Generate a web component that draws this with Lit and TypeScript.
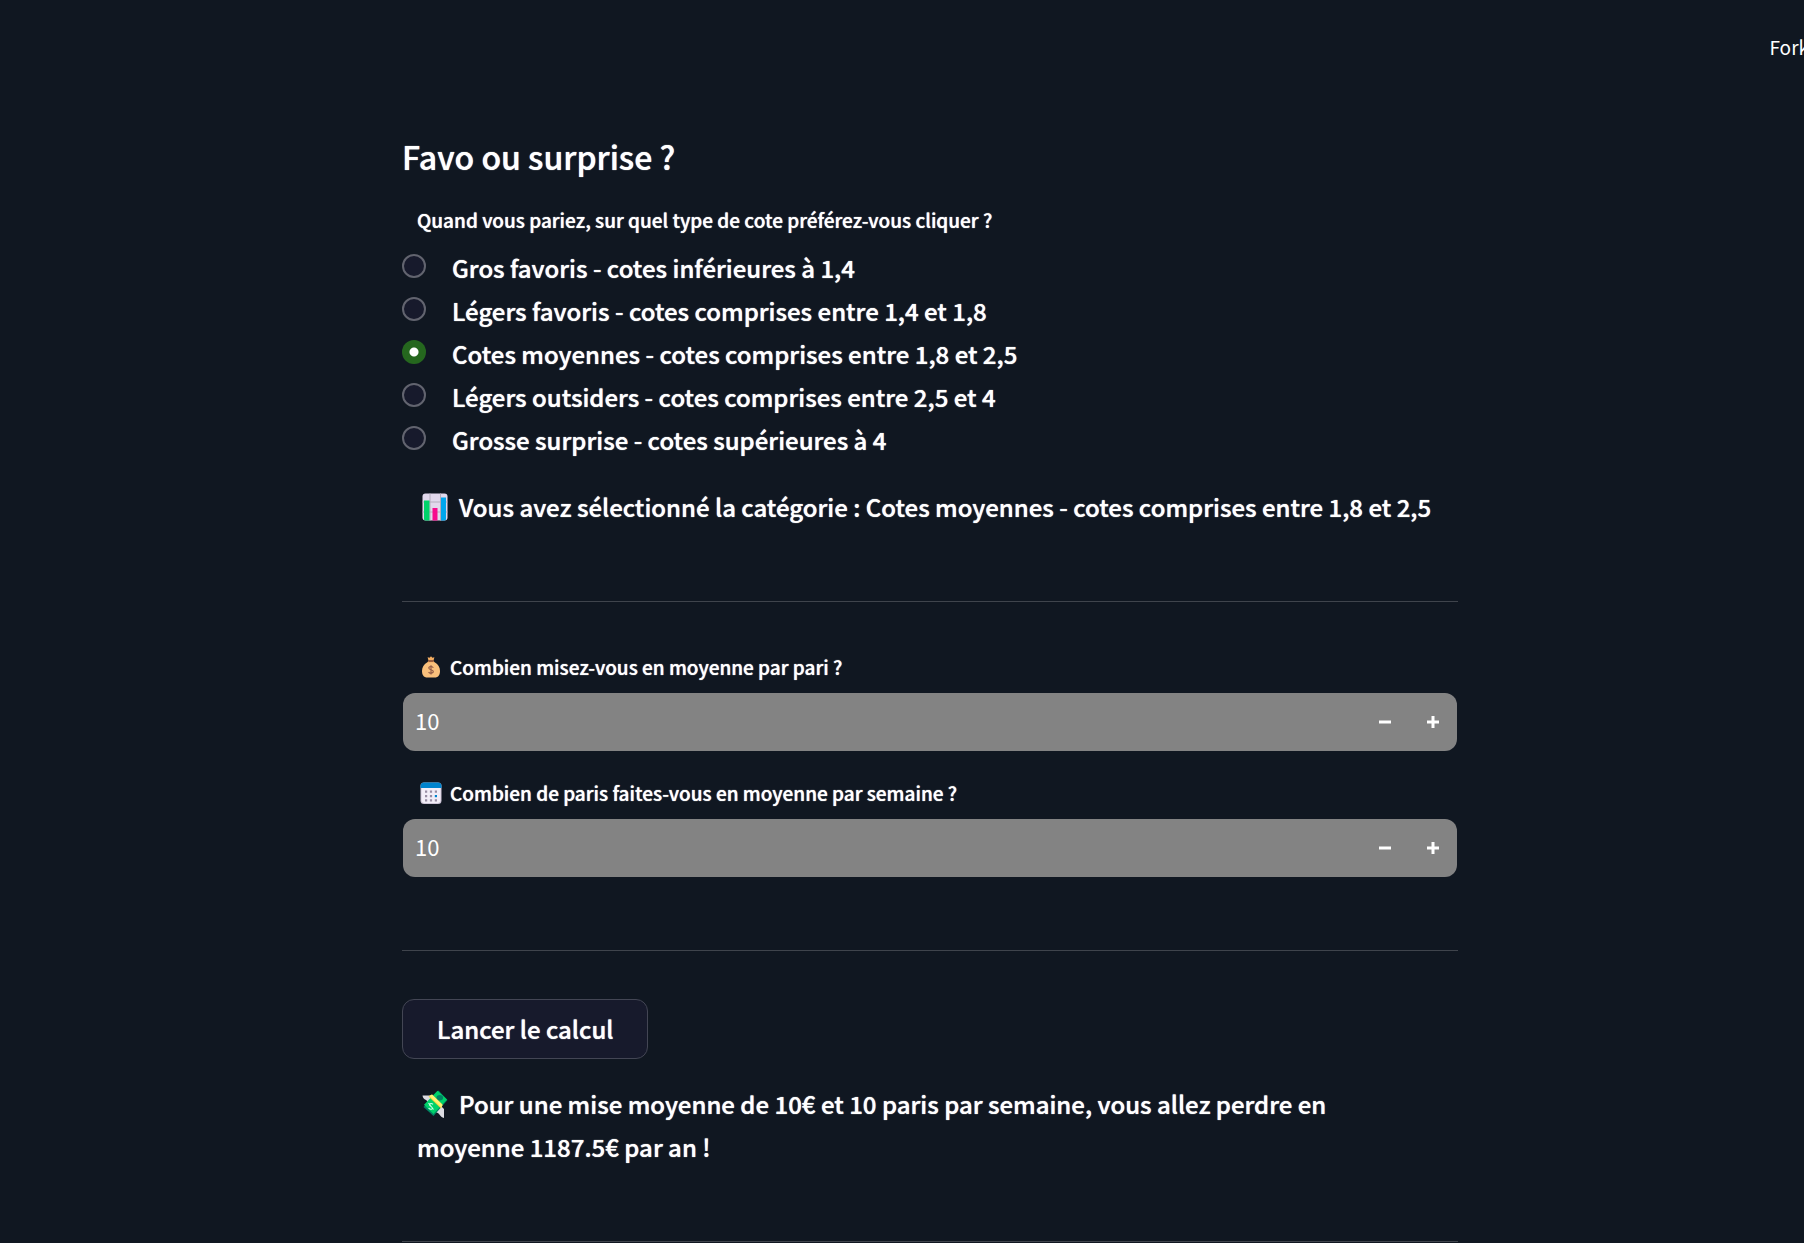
import { LitElement, html, css } from "lit";
import { customElement, state } from "lit/decorators.js";

const CATEGORIES = [
  "Gros favoris - cotes inférieures à 1,4",
  "Légers favoris - cotes comprises entre 1,4 et 1,8",
  "Cotes moyennes - cotes comprises entre 1,8 et 2,5",
  "Légers outsiders - cotes comprises entre 2,5 et 4",
  "Grosse surprise - cotes supérieures à 4",
];

const chartIcon = html`<svg class="icon large" viewBox="0 0 28 28" aria-hidden="true">
  <rect x="0.5" y="0.5" width="25" height="27" rx="3" fill="#e1d8ec" />
  <path d="M0.5 9h25M0.5 19h25M8 .5v27M18.5 .5v27" stroke="#b4acbc" fill="none" />
  <path d="M2 7.500h5.500v20H3.500a2 2 0 0 1-1.500-1z" fill="#00d26a" />
  <path d="M10.500 15h5v12.500h-5z" fill="#f70a8d" />
  <path d="M19 4.500h5v22a2 2 0 0 1-1.500 1H19z" fill="#00a6ed" />
</svg>`;

const moneyBagIcon = html`<svg class="icon small" viewBox="0 0 22 22" aria-hidden="true">
  <path d="M7.600 1.200 9.600 1.700 11 .2l1.400 1.500 2-.5-1 3.800H8.600z" fill="#f3ad61" />
  <path d="M8.300 5h5.400l1.600 2.500H6.700z" fill="#f3ad61" />
  <path d="M7 6.600C4 8.500 2 11 2 15c0 4.500 2.300 6.500 5 6.500h8c2.700 0 5-2 5-6.500 0-4-2-6.500-5-8.400z" fill="#f9c07c" />
  <rect x="8.200" y="4.300" width="5.600" height="1.500" rx=".7" fill="#7d4533" />
  <path d="M13.300 11.700c-.4-.8-1.200-1.200-2.300-1.200-1.300 0-2.200.6-2.200 1.600 0 2.400 4.500 1 4.500 3.500 0 1-.9 1.600-2.300 1.600-1.100 0-2-.5-2.400-1.300M11 9.200v9.300" stroke="#8c5543" stroke-width="1.100" fill="none" />
</svg>`;

const calendarIcon = html`<svg class="icon small" viewBox="0 0 22 22" aria-hidden="true">
  <rect x=".5" y=".5" width="21" height="21.500" rx="3.500" fill="#cdc4d6" />
  <path d="M1.500 5h19v13a3 3 0 0 1-3 3h-13a3 3 0 0 1-3-3z" fill="#f3eef8" />
  <path d="M.5 6V4A3.500 3.500 0 0 1 4 .5h14A3.500 3.500 0 0 1 21.500 4v2z" fill="#0084ce" />
  <path d="M5 8.500h2.200v2.200H5zM9.900 8.500h2.200v2.200H9.900zM14.800 8.500H17v2.200h-2.200zM5 13h2.200v2.200H5zM9.900 13h2.200v2.200H9.900zM5 17.300h2.200v2.200H5zM9.900 17.300h2.200v2.200H9.900zM14.800 17.300H17v2.200h-2.200z" fill="#998ea4" />
  <path d="M14.800 13H17v2.200h-2.200z" fill="#0084ce" />
</svg>`;

const flyingMoneyIcon = html`<svg class="icon large" viewBox="0 0 28 28" aria-hidden="true">
  <path d="M.5 5.500h9l5 3.500-8 7c-.5-3.500-1.200-5-2.500-6C1.800 9 .8 7.500.5 5.500z" fill="#dcdce2" />
  <path d="M22 28v-9l-5-5-5 8c3 .2 4 .8 5.200 2.200C18.500 26 20 27.500 22 28z" fill="#dcdce2" />
  <path d="M1.500 17 16.500.5 25.500 10 11.500 26z" fill="#008463" />
  <path d="M2 14.700 15.500.7 25 9.500 11.500 24z" fill="#00d26a" />
  <ellipse cx="17.800" cy="7.800" rx="3.300" ry="2.700" fill="#008463" />
  <path d="M6.500 6.500 10 4.500 20.500 14.500 19 18.500z" fill="#fcd53f" />
  <path d="m7.500 6 2.500-1.500L20.500 15l-1 2.500z" fill="#fff478" />
  <path d="M11 14.400c-1.200-1.100-2.700-1-3.300-.3-1.500 1.800 4 2.800 2.300 4.700-.8.800-2.300.6-3.400-.6M6.500 13l5 6.500" stroke="#caffe5" stroke-width="1.100" fill="none" />
</svg>`;

@customElement("amount-field")
export class AmountField extends LitElement {
  static properties = {
    label: { type: String },
    value: { type: Number },
    icon: { attribute: false },
  };

  declare label: string;
  declare value: number;
  declare icon: unknown;

  static styles = css`
    :host {
      display: block;
    }
    .label {
      display: flex;
      align-items: center;
      gap: 8px;
      padding: 0 18px;
      margin-bottom: 10px;
      font-size: 19px;
      font-weight: 500;
      line-height: 33px;
      text-shadow: 0 0 1px #fff;
    }
    .icon {
      flex: none;
      width: 22px;
      height: 24px;
    }
    .box {
      display: flex;
      height: 58px;
      margin: 0 1px;
      border-radius: 12px;
      background: #838383;
      overflow: hidden;
    }
    input {
      flex: 1;
      min-width: 0;
      padding: 0 12px 4px;
      border: 0;
      outline: 0;
      background: none;
      color: #fff;
      font: inherit;
      font-size: 22px;
      appearance: textfield;
    }
    input::-webkit-inner-spin-button,
    input::-webkit-outer-spin-button {
      appearance: none;
      margin: 0;
    }
    button {
      display: flex;
      align-items: center;
      justify-content: center;
      width: 48px;
      padding: 0;
      border: 0;
      background: none;
      color: #fff;
      cursor: pointer;
    }
    .sign {
      width: 12px;
      height: 12px;
    }
  `;

  private change(value: number) {
    this.dispatchEvent(new CustomEvent("amount", { detail: Math.max(0, value) }));
  }

  render() {
    return html`
      <label class="label" for="amount">${this.icon}<span>${this.label}</span></label>
      <div class="box">
        <input
          id="amount"
          type="number"
          min="0"
          .value=${String(this.value)}
          @change=${(e: Event) => this.change(Number((e.target as HTMLInputElement).value))}
        />
        <button type="button" aria-label="Diminuer" @click=${() => this.change(this.value - 1)}>
          <svg class="sign" viewBox="0 0 12 12"><path d="M0 4.500h12v3H0z" fill="currentColor" /></svg>
        </button>
        <button type="button" aria-label="Augmenter" @click=${() => this.change(this.value + 1)}>
          <svg class="sign" viewBox="0 0 12 12"><path d="M0 4.500h12v3H0zM4.500 0h3v12h-3z" fill="currentColor" /></svg>
        </button>
      </div>
    `;
  }
}

@customElement("app-root")
export class AppRoot extends LitElement {
  @state() private selected = 2;
  @state() private stake = 10;
  @state() private bets = 10;
  @state() private loss = 1187.5;

  static styles = css`
    :host {
      display: block;
      height: 100vh;
      overflow: hidden;
      background: #101721;
      color: #fff;
      font-family: "Noto Sans CJK JP", "Noto Sans", sans-serif;
    }
    .page {
      width: calc(100% + 56px);
    }
    .top {
      display: flex;
      justify-content: flex-end;
      align-items: center;
      height: 92px;
      padding-right: 51px;
      box-sizing: border-box;
    }
    .fork {
      color: #fff;
      font-size: 19px;
      text-decoration: none;
    }
    .content {
      max-width: 1056px;
      margin: 0 auto;
      padding-top: 42px;
    }
    .title {
      margin: 0 0 26px;
      font-size: 32px;
      font-weight: 500;
      line-height: 44px;
      text-shadow: 0 0 1px #fff;
    }
    .choices {
      margin: 0 0 24px;
      padding: 0;
      border: 0;
    }
    .question {
      padding: 0 15px;
      margin-bottom: 10px;
      font-size: 19px;
      font-weight: 500;
      line-height: 32px;
      text-shadow: 0 0 1px #fff;
    }
    .choice {
      display: flex;
      align-items: flex-start;
      gap: 26px;
      font-size: 24px;
      font-weight: 500;
      line-height: 43px;
      text-shadow: 0 0 1px #fff;
      cursor: pointer;
    }
    .radio {
      appearance: none;
      flex: none;
      width: 24px;
      height: 24px;
      margin: 8px 0 0;
      border: 2px solid #62646f;
      border-radius: 50%;
      background: #171a2c;
    }
    .radio:checked {
      border: 0;
      background: radial-gradient(circle, #fff 4px, #25671e 5px);
    }
    .message {
      margin: 0;
      padding: 0 24px 0 15px;
      font-size: 24px;
      font-weight: 500;
      line-height: 43px;
      text-shadow: 0 0 1px #fff;
    }
    .icon.large {
      width: 28px;
      height: 28px;
      margin: 0 9px 0 5px;
      vertical-align: -4px;
    }
    .rule {
      height: 1px;
      margin: 73px 0 48px;
      border: 0;
      background: #3f444c;
    }
    .fields {
      display: grid;
      gap: 25px;
    }
    .run {
      display: block;
      height: 60px;
      margin-bottom: 23px;
      padding: 0 34px 2px;
      border: 1px solid #434654;
      border-radius: 12px;
      background: #171a2c;
      color: #fff;
      font: inherit;
      font-size: 24px;
      font-weight: 500;
      text-shadow: 0 0 1px #fff;
      cursor: pointer;
    }
  `;

  private compute() {
    this.loss = (this.stake * this.bets * 1187.5) / 100;
  }

  render() {
    return html`<div class="page">
      <header class="top"><a class="fork" href="#">Fork</a></header>
      <main class="content">
        <h2 class="title">Favo ou surprise ?</h2>
        <fieldset class="choices">
          <legend class="question">Quand vous pariez, sur quel type de cote préférez-vous cliquer ?</legend>
          ${CATEGORIES.map(
            (name, i) => html`<label class="choice">
              <input
                class="radio"
                type="radio"
                name="category"
                .checked=${i === this.selected}
                @change=${() => (this.selected = i)}
              />
              <span>${name}</span>
            </label>`,
          )}
        </fieldset>
        <p class="message">${chartIcon}Vous avez sélectionné la catégorie : ${CATEGORIES[this.selected]}</p>
        <hr class="rule" />
        <div class="fields">
          <amount-field
            label="Combien misez-vous en moyenne par pari ?"
            .icon=${moneyBagIcon}
            .value=${this.stake}
            @amount=${(e: CustomEvent) => (this.stake = e.detail)}
          ></amount-field>
          <amount-field
            label="Combien de paris faites-vous en moyenne par semaine ?"
            .icon=${calendarIcon}
            .value=${this.bets}
            @amount=${(e: CustomEvent) => (this.bets = e.detail)}
          ></amount-field>
        </div>
        <hr class="rule" />
        <button class="run" type="button" @click=${this.compute}>Lancer le calcul</button>
        <p class="message">
          ${flyingMoneyIcon}Pour une mise moyenne de ${this.stake}€ et ${this.bets} paris par semaine, vous allez perdre
          en moyenne ${this.loss}€ par an !
        </p>
        <hr class="rule" />
      </main>
    </div>`;
  }
}
